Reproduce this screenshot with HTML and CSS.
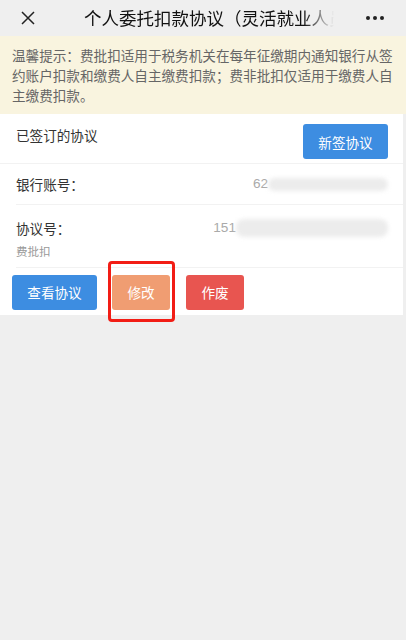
FILE: index.html
```html
<!DOCTYPE html>
<html lang="zh-CN">
<head>
<meta charset="utf-8">
<title>个人委托扣款协议</title>
<link rel="stylesheet" href="styles.css">
</head>
<body>
<div class="page">
<header class="topbar">
  <div class="close">
    <svg width="14" height="14" viewBox="0 0 14 14"><path d="M1 1L13 13M13 1L1 13" stroke="#222" stroke-width="1.5" fill="none"/></svg>
  </div>
  <div class="title">个人委托扣款协议（灵活就业人员）</div>
  <div class="more"><span></span><span></span><span></span></div>
</header>
<div class="notice">温馨提示：费批扣适用于税务机关在每年征缴期内通知银行从签约账户扣款和缴费人自主缴费扣款；费非批扣仅适用于缴费人自主缴费扣款。</div>
<section class="card">
  <div class="card-head">
    <div class="head-label">已签订的协议</div>
    <button class="btn btn-blue btn-new">新签协议</button>
  </div>
  <div class="row row-bank">
    <div class="label">银行账号：</div>
    <div class="value">62<span class="blur blur-bank"></span></div>
  </div>
  <div class="row row-proto">
    <div class="row-main">
      <div class="label">协议号：</div>
      <div class="value">151<span class="blur blur-proto"></span></div>
    </div>
    <div class="sub">费批扣</div>
  </div>
  <div class="actions">
    <button class="btn btn-blue btn-view">查看协议</button>
    <div class="highlight-wrap">
      <button class="btn btn-orange">修改</button>
      <div class="highlight"></div>
    </div>
    <button class="btn btn-red">作废</button>
  </div>
</section>
</div>
</body>
</html>
```
FILE: styles.css
```css
* { box-sizing: border-box; }
html, body {
  margin: 0;
  padding: 0;
  background: #efefef;
  font-family: "Noto Sans CJK SC", "Noto Sans", sans-serif;
  color: #333;
}
.page {
  min-height: 640px;
  background: #efefef;
}
.topbar {
  height: 36px;
  display: flex;
  align-items: center;
  background: #efefef;
}
.close {
  width: 84px;
  padding-left: 21px;
  display: flex;
  align-items: center;
  height: 36px;
}
.close svg { display: block; }
.title {
  flex: 1;
  font-size: 17.5px;
  line-height: 24px;
  color: #111;
  white-space: nowrap;
  overflow: hidden;
  -webkit-mask-image: linear-gradient(to right, #000 88%, transparent 100%);
  mask-image: linear-gradient(to right, #000 88%, transparent 100%);
  max-width: 250px;
}
.more {
  width: 72px;
  display: flex;
  justify-content: flex-end;
  gap: 3px;
  padding-right: 22px;
  align-items: center;
}
.more span {
  width: 4px;
  height: 4px;
  border-radius: 50%;
  background: #222;
}
.notice {
  background: #f9f4df;
  color: #666;
  font-size: 13.6px;
  line-height: 20px;
  padding: 9px 12px 6px 12px;
  height: 78px;
}
.card {
  background: #fff;
  margin-right: 3px;
}
.card-head {
  display: flex;
  justify-content: space-between;
  align-items: flex-start;
  padding: 10px 15px 4px 16px;
  border-bottom: 1px solid #f2f2f2;
  height: 50px;
}
.head-label {
  font-size: 13.6px;
  line-height: 20px;
  margin-top: 1px;
  color: #333;
}
.btn {
  border: none;
  border-radius: 3px;
  color: #fff;
  font-family: inherit;
  font-size: 13.6px;
  height: 35px;
  padding: 0;
  cursor: pointer;
}
.btn-blue { background: #3d8de1; }
.btn-new { width: 85px; }
.btn-view { width: 85px; }
.btn-orange { background: #f09d72; width: 58px; display: block; }
.btn-red { background: #e85550; width: 58px; }
.row {
  margin-left: 16px;
  padding-right: 15px;
  border-bottom: 1px solid #f2f2f2;
}
.row-bank {
  height: 41px;
  display: flex;
  justify-content: space-between;
  align-items: center;
}
.row-proto {
  height: 63px;
  padding-top: 13px;
}
.row-main {
  display: flex;
  justify-content: space-between;
  align-items: center;
  height: 20px;
}
.label {
  font-size: 13.6px;
  line-height: 20px;
  color: #333;
}
.value {
  font-family: "Liberation Sans", Arial, sans-serif;
  font-size: 13.6px;
  line-height: 20px;
  color: #aaa;
  display: flex;
  align-items: center;
}
.blur {
  display: inline-block;
  background: #ececec;
  border-radius: 8px;
  filter: blur(2px);
}
.blur-bank { width: 120px; height: 13px; }
.blur-proto { width: 152px; height: 18px; }
.sub {
  font-size: 11.5px;
  line-height: 16px;
  color: #999;
  margin-top: 5px;
}
.actions {
  display: flex;
  align-items: center;
  padding: 6px 12px 5px 12px;
  gap: 15px;
  height: 47px;
}
.highlight-wrap {
  position: relative;
  width: 58px;
  height: 35px;
  margin-right: 1px;
}
.highlight {
  position: absolute;
  left: -4px;
  top: -14px;
  width: 67px;
  height: 61px;
  border: 3px solid #f21d15;
  border-radius: 4px;
  z-index: 5;
  pointer-events: none;
}
```
